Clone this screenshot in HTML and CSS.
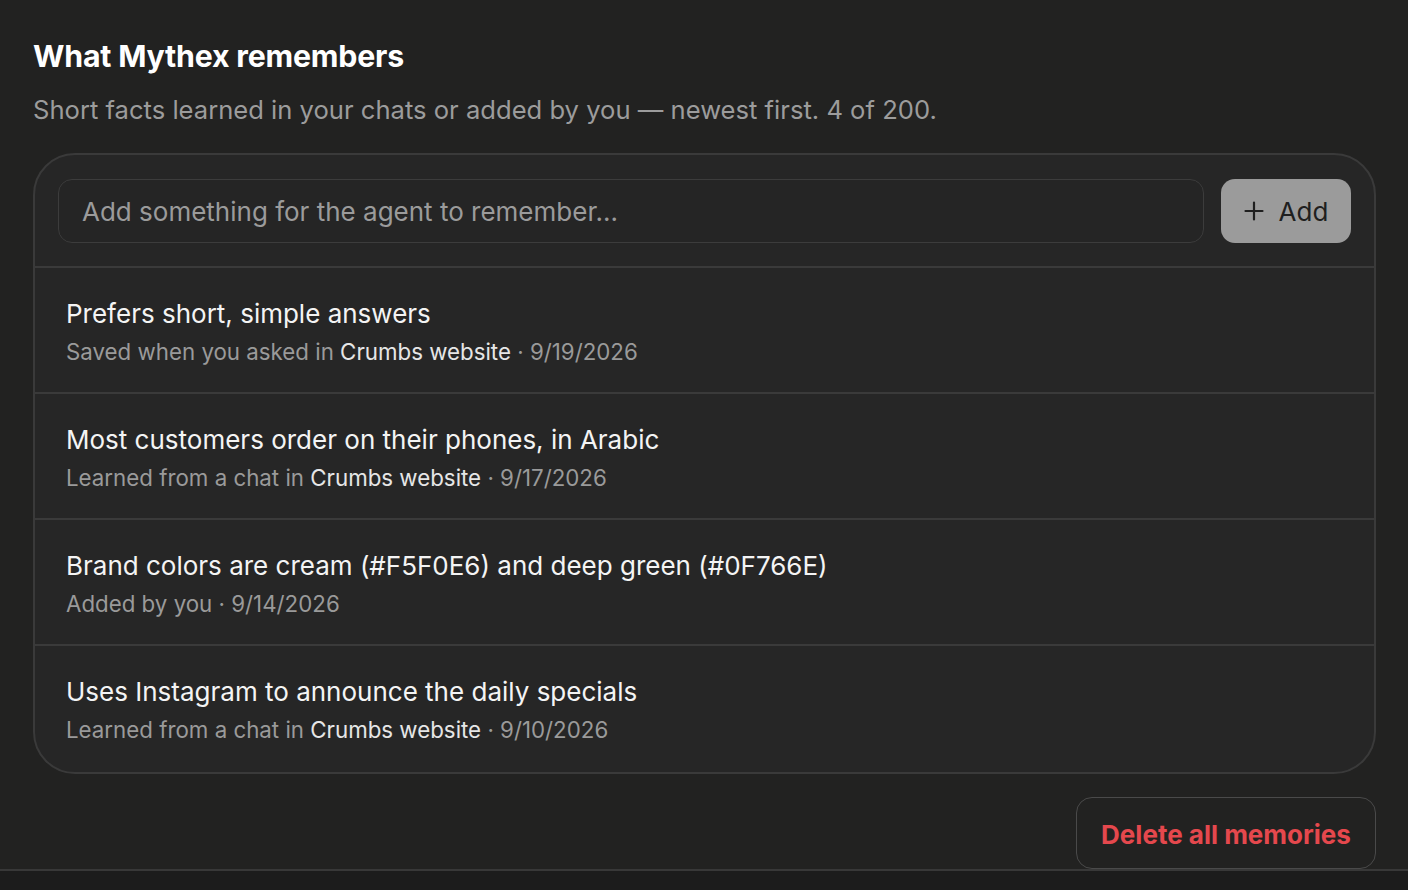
FILE: index.html
```html
<!DOCTYPE html>
<html lang="en">
<head>
<meta charset="utf-8">
<title>Memories</title>
<link rel="stylesheet" href="styles.css">
</head>
<body>
<div class="page">
  <section class="memories">
    <h1 class="title">What Mythex remembers</h1>
    <p class="subtitle">Short facts learned in your chats or added by you — newest first. 4 of 200.</p>
    <div class="card">
      <div class="add-row">
        <div class="input">Add something for the agent to remember...</div>
        <button class="add-btn"><svg class="plus" width="20" height="20" viewBox="0 0 20 20"><path d="M10 1.5v17M1.5 10h17" stroke="#1f1f1f" stroke-width="2.2" stroke-linecap="round"/></svg><span>Add</span></button>
      </div>
      <div class="item">
        <div class="item-title">Prefers short, simple answers</div>
        <div class="item-meta">Saved when you asked in <span class="src">Crumbs website</span> · 9/19/2026</div>
      </div>
      <div class="item">
        <div class="item-title">Most customers order on their phones, in Arabic</div>
        <div class="item-meta">Learned from a chat in <span class="src">Crumbs website</span> · 9/17/2026</div>
      </div>
      <div class="item">
        <div class="item-title">Brand colors are cream (#F5F0E6) and deep green (#0F766E)</div>
        <div class="item-meta">Added by you · 9/14/2026</div>
      </div>
      <div class="item">
        <div class="item-title">Uses Instagram to announce the daily specials</div>
        <div class="item-meta">Learned from a chat in <span class="src">Crumbs website</span> · 9/10/2026</div>
      </div>
    </div>
    <div class="actions">
      <button class="delete-btn">Delete all memories</button>
    </div>
  </section>
</div>
</body>
</html>
```

FILE: styles.css
```css
* { box-sizing: border-box; }
html, body { margin: 0; padding: 0; }
body {
  background: #1c1c1c;
  font-family: Inter, "Noto Sans", sans-serif;
  color: #f2f2f2;
  height: 890px;
  overflow: hidden;
}
.page {
  background: #222221;
  border-bottom: 2px solid #383838;
  padding: 39px 32px 0 33px;
  height: 871px;
}
.title {
  margin: 0;
  font-size: 30.3px;
  font-weight: 700;
  line-height: 34px;
  color: #ffffff;
  letter-spacing: -0.2px;
}
.subtitle {
  margin: 21px 0 0 0;
  font-size: 25.6px;
  line-height: 32px;
  color: #9c9c9c;
}
.card {
  margin-top: 27px;
  background: #262626;
  border: 2px solid #3a3a3a;
  border-radius: 42px;
  overflow: hidden;
}
.add-row {
  display: flex;
  gap: 17px;
  padding: 24px 23px 23px 23px;
  border-bottom: 2px solid #3a3a3a;
}
.input {
  flex: 1;
  height: 64px;
  border: 1.5px solid #3c3c3c;
  border-radius: 14px;
  background: #252525;
  padding: 0 23px;
  display: flex;
  align-items: center;
  font-size: 26px;
  color: #9b9b9b;
}
.add-btn {
  width: 130px;
  height: 64px;
  border: none;
  border-radius: 14px;
  background: #9b9b9b;
  color: #1f1f1f;
  font-family: inherit;
  font-size: 26px;
  display: flex;
  align-items: center;
  justify-content: center;
  gap: 15px;
  padding: 0;
}
.item {
  height: 126px;
  padding: 28px 31px 0 31px;
  border-bottom: 2px solid #3a3a3a;
}
.item:last-child { border-bottom: none; }
.item-title {
  font-size: 26px;
  line-height: 36px;
  color: #f4f4f4;
}
.item-meta {
  margin-top: 5px;
  font-size: 22.3px;
  line-height: 30px;
  color: #9a9a9a;
}
.src { color: #e6e6e6; }
.actions {
  display: flex;
  justify-content: flex-end;
  margin-top: 23px;
}
.delete-btn {
  width: 300px;
  height: 72px;
  padding-top: 3px;
  background: transparent;
  border: 1.5px solid #4a4a4a;
  border-radius: 16px;
  color: #e5484d;
  font-family: inherit;
  font-size: 26px;
  font-weight: 700;
}
```
